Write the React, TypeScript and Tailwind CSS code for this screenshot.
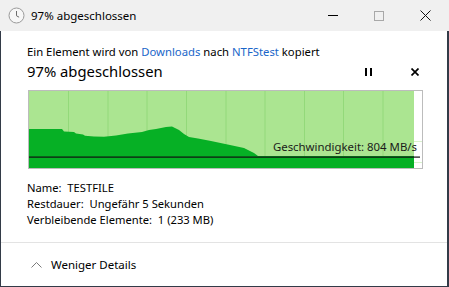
import React from "react";

const curve =
  "0,38 33,38 35,40.5 45,41 47,42.5 54,43.5 56,44.7 65,45.5 75,45.7 87,44.5 99,42.5 113,41 120,39 127,38 137,36 143,35.5 146,37 150,39 155,43 160,46 169,47.5 182,50 201,54 215,57 225,62 229,65 385,65 385,77 0,77";

const gridX = [39.5, 79, 118, 157.5, 197, 236, 275.5, 314.5, 354];

function ClockIcon() {
  return (
    <svg width="17" height="17" viewBox="0 0 17 17">
      <circle cx="8.5" cy="8.5" r="7.5" fill="#f7f7f7" stroke="#9a9a9a" strokeWidth="1" />
      <path d="M8.5 4v4.8l2.6 1.4" fill="none" stroke="#6d6d6d" strokeWidth="1" />
    </svg>
  );
}

function SpeedChart() {
  return (
    <div className="relative ml-px w-[395px] h-[79px] border border-[#bcbcbc] bg-white">
      <svg width="393" height="77" viewBox="0 0 393 77" className="block">
        <rect x="0" y="0" width="385" height="77" fill="#abe591" />
        {gridX.map((x) => (
          <line key={x} x1={x} y1="0" x2={x} y2="77" stroke="#93d97a" strokeWidth="1" />
        ))}
        <line x1="385" y1="50.5" x2="393" y2="50.5" stroke="#d9f2cd" strokeWidth="1" />
        <line x1="385" y1="71.5" x2="393" y2="71.5" stroke="#d9f2cd" strokeWidth="1" />
        <polygon points={curve} fill="#06b025" />
        <rect x="0" y="65.5" width="391" height="1.2" fill="#111" />
      </svg>
      <span className="absolute right-[5px] top-[48px] text-[11.4px] leading-[16px] text-[#1a1a1a]">
        Geschwindigkeit: 804 MB/s
      </span>
    </div>
  );
}

export default function App() {
  return (
    <div className="w-[449px] h-[287px] flex flex-col bg-white font-['Segoe_UI','Noto_Sans',sans-serif] text-black">
      <div className="h-[31px] flex items-center bg-[#f0f0f0] shrink-0">
        <div className="ml-[8px]">
          <ClockIcon />
        </div>
        <span className="ml-[6px] text-[11.5px] leading-[16px]">97% abgeschlossen</span>
        <div className="ml-auto flex h-full pr-px">
          <div className="w-[46px] flex items-center justify-center">
            <div className="w-[10px] h-px bg-black" />
          </div>
          <div className="w-[46px] flex items-center justify-center">
            <div className="w-[10px] h-[10px] border border-[#a8a8a8]" />
          </div>
          <div className="w-[46px] flex items-center justify-center">
            <svg width="11" height="11" viewBox="0 0 11 11">
              <path d="M0.5 0.5l10 10M10.5 0.5l-10 10" stroke="#111" strokeWidth="1" />
            </svg>
          </div>
        </div>
      </div>

      <div className="flex-1 flex flex-col border-l border-r-2 border-b border-[#333b48]">
        <div className="pl-[26px] pr-[28px] pt-[13px]">
          <p className="text-[11.3px] leading-[16px]">
            Ein Element wird von <span className="text-[#1a66c9]">Downloads</span> nach{" "}
            <span className="text-[#1a66c9]">NTFStest</span> kopiert
          </p>
          <div className="mt-px flex items-center h-[20px]">
            <span className="text-[14.8px] leading-[20px]">97% abgeschlossen</span>
            <div className="ml-auto flex items-center">
              <div className="flex gap-[3px] h-[8px] mt-[2px]">
                <div className="w-[2px] h-full bg-black" />
                <div className="w-[2px] h-full bg-black" />
              </div>
              <svg width="8" height="8" viewBox="0 0 8 8" className="ml-[39px] mt-[2px]">
                <path d="M0.5 0.5l7 7M7.5 0.5l-7 7" stroke="#000" strokeWidth="1.7" />
              </svg>
            </div>
          </div>
          <div className="mt-[9px]">
            <SpeedChart />
          </div>
          <div className="mt-[11px] text-[11.2px] leading-[16px]">
            <p>Name:&nbsp; TESTFILE</p>
            <p>Restdauer:&nbsp; Ungefähr 5 Sekunden</p>
            <p>Verbleibende Elemente:&nbsp; 1 (233 MB)</p>
          </div>
        </div>
        <div className="mt-[14px] h-px bg-[#e3e3e3]" />
        <div className="flex-1 flex items-center pl-[30px]">
          <svg width="11" height="7" viewBox="0 0 11 7">
            <path d="M0.5 6.5l5-5 5 5" fill="none" stroke="#7a7a7a" strokeWidth="1" />
          </svg>
          <span className="ml-[9px] text-[11.5px] leading-[16px]">Weniger Details</span>
        </div>
      </div>
    </div>
  );
}
